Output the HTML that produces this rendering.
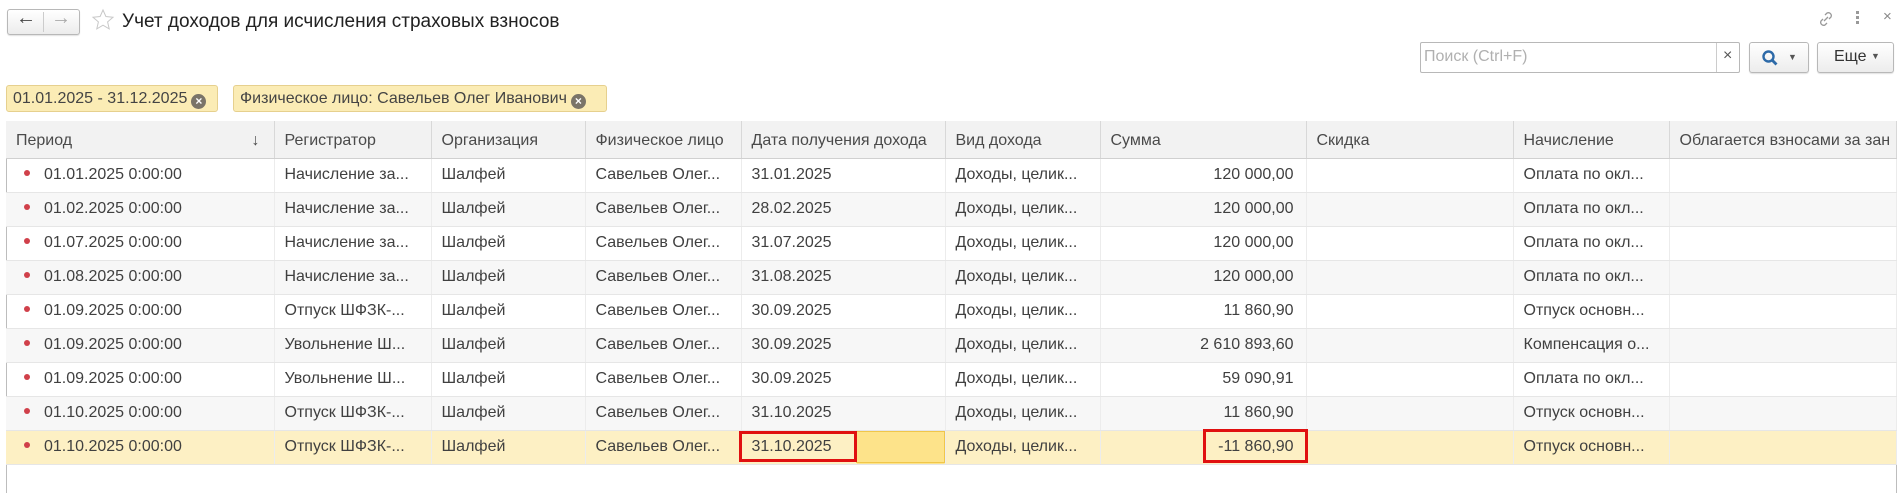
<!DOCTYPE html>
<html><head><meta charset="utf-8"><style>
*{box-sizing:border-box;margin:0;padding:0}
body{width:1904px;height:493px;background:#fff;font-family:"Liberation Sans",Arial,sans-serif;color:#333;position:relative;overflow:hidden;font-size:16px}
.abs{position:absolute}
.btn{position:absolute;border:1px solid #b8b8b8;border-radius:3px;background:linear-gradient(#fff,#ececec);box-shadow:0 1px 1px rgba(0,0,0,.12)}
.chip{position:absolute;top:85px;height:27px;background:#fbecb5;border:1px solid #e6d08e;border-radius:3px;font-size:16px;line-height:25px;padding-left:6px;color:#444}
.cx{display:inline-block;width:15px;height:15px;border-radius:50%;background:#7a7468;color:#fff;font-size:12px;line-height:15px;text-align:center;vertical-align:-2px;margin-left:4px;font-weight:bold}
table{position:absolute;left:6px;top:121px;border-collapse:collapse;table-layout:fixed;width:1890px}
td,th{height:34px;font-weight:normal;text-align:left;padding-left:10px;white-space:nowrap;overflow:hidden;font-size:16px;color:#404040}
th{background:#f2f2f2;height:37px;padding-top:3px;border-right:1px solid #d8d8d8;border-bottom:1px solid #d0d0d0;color:#4a4a4a}
td{border-bottom:1px solid #e6e6e6;border-right:1px solid #ececec}
tr.g td{background:#f7f7f7}
tr.s td{background:#fdf0c4}
.r{text-align:right;padding-right:12px}
.dot{display:inline-block;width:6px;height:6px;border-radius:50%;background:#d0404a;margin-left:8px;margin-right:14px;vertical-align:3px}
</style></head><body>
<div class="btn" style="left:7px;top:9px;width:73px;height:26px"></div>
<div class="abs" style="left:43px;top:12px;width:1px;height:20px;background:#ccc"></div>
<div class="abs" style="left:16px;top:7px;font-size:20px;color:#444">←</div>
<div class="abs" style="left:51px;top:7px;font-size:20px;color:#aaa">→</div>
<svg class="abs" style="left:91px;top:8px" width="24" height="24" viewBox="0 0 24 24"><path d="M12 2l2.9 6.5 7.1.7-5.4 4.7 1.6 7-6.2-3.7-6.2 3.7 1.6-7L2 9.2l7.1-.7z" fill="none" stroke="#c8c8c8" stroke-width="1"/></svg>
<div class="abs" style="left:122px;top:11px;font-size:19px;color:#222">Учет доходов для исчисления страховых взносов</div>
<svg class="abs" style="left:1817px;top:10px" width="18" height="18" viewBox="0 0 18 18"><path d="M7 11l4-4M8 5l2-2a3 3 0 014 4l-2 2M10 13l-2 2a3 3 0 01-4-4l2-2" fill="none" stroke="#999" stroke-width="1.3"/></svg>
<div class="abs" style="left:1856px;top:11px;width:3px;height:3px;background:#999;box-shadow:0 5px 0 #999,0 10px 0 #999"></div>
<div class="abs" style="left:1883px;top:8px;font-size:15px;color:#888">×</div>
<div class="abs" style="left:1420px;top:42px;width:320px;height:31px;border:1px solid #b8b8b8;border-radius:2px;background:#fff"></div>
<div class="abs" style="left:1424px;top:48px;font-size:16px;color:#b0b0b0">Поиск (Ctrl+F)</div>
<div class="abs" style="left:1716px;top:43px;width:1px;height:29px;background:#ccc"></div>
<div class="abs" style="left:1723px;top:47px;font-size:16px;color:#555">×</div>
<div class="btn" style="left:1749px;top:42px;width:60px;height:31px"></div>
<svg class="abs" style="left:1761px;top:49px" width="18" height="18" viewBox="0 0 18 18"><circle cx="7.5" cy="7.5" r="5" fill="none" stroke="#2d6aa8" stroke-width="2.4"/><path d="M11 11l4.5 4.5" stroke="#2d6aa8" stroke-width="2.8"/></svg>
<div class="abs" style="left:1788px;top:52px;font-size:9px;color:#555">▼</div>
<div class="btn" style="left:1817px;top:42px;width:77px;height:31px"></div>
<div class="abs" style="left:1834px;top:48px;font-size:16px;color:#333">Еще <span style="font-size:9px;color:#555;vertical-align:2px">▼</span></div>
<div class="chip" style="left:6px;width:212px">01.01.2025 - 31.12.2025<span class="cx">×</span></div>
<div class="chip" style="left:233px;width:374px">Физическое лицо: Савельев Олег Иванович<span class="cx">×</span></div>
<div class="abs" style="left:6px;top:121px;width:1891px;height:372px;border:1px solid #bdbdbd;border-bottom:none"></div>
<table>
<colgroup><col style="width:268px"><col style="width:157px"><col style="width:154px"><col style="width:156px"><col style="width:204px"><col style="width:155px"><col style="width:206px"><col style="width:207px"><col style="width:156px"><col style="width:227px"></colgroup>
<tr><th>Период<span style="float:right;margin-right:14px">↓</span></th><th>Регистратор</th><th>Организация</th><th>Физическое лицо</th><th>Дата получения дохода</th><th>Вид дохода</th><th>Сумма</th><th>Скидка</th><th>Начисление</th><th>Облагается взносами за зан</th></tr>
<tr><td><span class="dot"></span>01.01.2025 0:00:00</td><td>Начисление за...</td><td>Шалфей</td><td>Савельев Олег...</td><td>31.01.2025</td><td>Доходы, целик...</td><td class="r">120 000,00</td><td></td><td>Оплата по окл...</td><td></td></tr>
<tr class="g"><td><span class="dot"></span>01.02.2025 0:00:00</td><td>Начисление за...</td><td>Шалфей</td><td>Савельев Олег...</td><td>28.02.2025</td><td>Доходы, целик...</td><td class="r">120 000,00</td><td></td><td>Оплата по окл...</td><td></td></tr>
<tr><td><span class="dot"></span>01.07.2025 0:00:00</td><td>Начисление за...</td><td>Шалфей</td><td>Савельев Олег...</td><td>31.07.2025</td><td>Доходы, целик...</td><td class="r">120 000,00</td><td></td><td>Оплата по окл...</td><td></td></tr>
<tr class="g"><td><span class="dot"></span>01.08.2025 0:00:00</td><td>Начисление за...</td><td>Шалфей</td><td>Савельев Олег...</td><td>31.08.2025</td><td>Доходы, целик...</td><td class="r">120 000,00</td><td></td><td>Оплата по окл...</td><td></td></tr>
<tr><td><span class="dot"></span>01.09.2025 0:00:00</td><td>Отпуск ШФЗК-...</td><td>Шалфей</td><td>Савельев Олег...</td><td>30.09.2025</td><td>Доходы, целик...</td><td class="r">11 860,90</td><td></td><td>Отпуск основн...</td><td></td></tr>
<tr class="g"><td><span class="dot"></span>01.09.2025 0:00:00</td><td>Увольнение Ш...</td><td>Шалфей</td><td>Савельев Олег...</td><td>30.09.2025</td><td>Доходы, целик...</td><td class="r">2 610 893,60</td><td></td><td>Компенсация о...</td><td></td></tr>
<tr><td><span class="dot"></span>01.09.2025 0:00:00</td><td>Увольнение Ш...</td><td>Шалфей</td><td>Савельев Олег...</td><td>30.09.2025</td><td>Доходы, целик...</td><td class="r">59 090,91</td><td></td><td>Оплата по окл...</td><td></td></tr>
<tr class="g"><td><span class="dot"></span>01.10.2025 0:00:00</td><td>Отпуск ШФЗК-...</td><td>Шалфей</td><td>Савельев Олег...</td><td>31.10.2025</td><td>Доходы, целик...</td><td class="r">11 860,90</td><td></td><td>Отпуск основн...</td><td></td></tr>
<tr class="s"><td><span class="dot"></span>01.10.2025 0:00:00</td><td>Отпуск ШФЗК-...</td><td>Шалфей</td><td>Савельев Олег...</td><td style="background:linear-gradient(90deg,#fdf0c4 57%,#fde38a 57%)">31.10.2025</td><td>Доходы, целик...</td><td class="r">-11 860,90</td><td></td><td>Отпуск основн...</td><td></td></tr>
</table>
<div class="abs" style="left:856px;top:431px;width:89px;height:32px;border:1px solid #f0c64a"></div>
<div class="abs" style="left:739px;top:431px;width:118px;height:31px;border:3px solid #e01010"></div>
<div class="abs" style="left:1203px;top:429px;width:105px;height:34px;border:3px solid #e01010"></div>
</body></html>
